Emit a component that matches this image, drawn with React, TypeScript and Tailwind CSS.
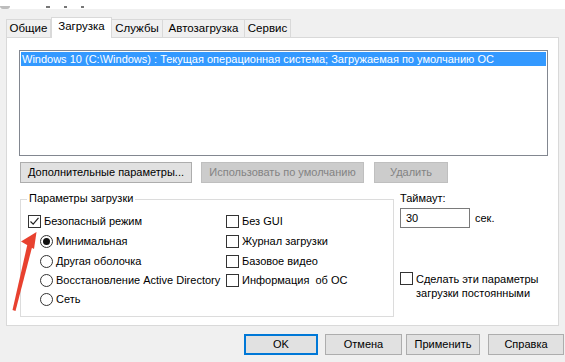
import React from "react";

const font = { fontFamily: '"Liberation Sans", Arial, sans-serif' };

function Check({ checked = false }: { checked?: boolean }) {
  return (
    <span className="w-[13px] h-[13px] border border-[#333333] bg-white flex items-center justify-center shrink-0">
      {checked && (
        <svg width="11" height="11" viewBox="0 0 11 11">
          <path d="M1.5 5.5 L4.2 8.2 L9.5 1.8" fill="none" stroke="#222" strokeWidth="1.2" />
        </svg>
      )}
    </span>
  );
}

function Radio({ checked = false }: { checked?: boolean }) {
  return (
    <span className="w-[13px] h-[13px] rounded-full border border-[#333333] bg-white flex items-center justify-center shrink-0">
      {checked && <span className="w-[7px] h-[7px] rounded-full bg-[#111]" />}
    </span>
  );
}

function Btn({ children, w, cls = "" }: { children: React.ReactNode; w: string; cls?: string }) {
  return (
    <div className={`h-[21px] ${w} border border-[#adadad] bg-[#e1e1e1] flex items-center justify-center text-black ${cls}`}>
      {children}
    </div>
  );
}

export default function App() {
  return (
    <div className="w-[565px] h-[362px] bg-[#f0f0f0] relative overflow-hidden text-[11px] text-black leading-none whitespace-nowrap" style={font}>
      {/* title strip */}
      <div className="h-[9px] bg-white overflow-hidden flex items-end">
        <div className="w-[10px] h-[3px] bg-[#bdbdbd] rounded-b-sm ml-0" />
        <div className="ml-[36px] mb-[1px] w-[48px] h-[2px] flex gap-[14px]">
          <span className="w-[4px] h-[2px] bg-[#777]" />
          <span className="w-[3px] h-[2px] bg-[#777]" />
          <span className="w-[3px] h-[2px] bg-[#777]" />
        </div>
      </div>

      {/* tabs */}
      <div className="mt-[8px] pl-[6px] flex items-end h-[20px] text-[11.5px]">
        <div className="w-[45px] h-[18px] border border-b-0 border-[#d9d9d9] bg-[#f0f0f0] flex items-center justify-center">Общие</div>
        <div className="w-[61px] h-[21px] border border-b-0 border-[#d9d9d9] bg-white flex items-center justify-center pb-[2px] relative z-10 -mb-px">Загрузка</div>
        <div className="w-[51px] h-[18px] border border-b-0 border-l-0 border-[#d9d9d9] bg-[#f0f0f0] flex items-center justify-center">Службы</div>
        <div className="w-[82px] h-[18px] border border-b-0 border-l-0 border-[#d9d9d9] bg-[#f0f0f0] flex items-center justify-center">Автозагрузка</div>
        <div className="w-[46px] h-[18px] border border-b-0 border-l-0 border-[#d9d9d9] bg-[#f0f0f0] flex items-center justify-center">Сервис</div>
      </div>

      {/* panel */}
      <div className="ml-[6px] w-[553px] h-[289px] bg-white border border-[#d9d9d9] pl-[12px] pt-[12px]">
        {/* list */}
        <div className="w-[529px] h-[106px] border border-[#828790] p-px">
          <div className="h-[14px] bg-[#3399ff] text-white flex items-center pl-[1px]">
            Windows 10 (C:\Windows) : Текущая операционная система; Загружаемая по умолчанию ОС
          </div>
        </div>

        {/* buttons row */}
        <div className="mt-[6px] flex items-center">
          <Btn w="w-[172px]" cls="ml-px">Дополнительные параметры...</Btn>
          <div className="ml-[9px] h-[21px] w-[163px] border border-[#bfbfbf] bg-[#cccccc] text-[#838383] flex items-center justify-center">Использовать по умолчанию</div>
          <div className="ml-[10px] h-[21px] w-[74px] border border-[#bfbfbf] bg-[#cccccc] text-[#838383] flex items-center justify-center">Удалить</div>
        </div>

        <div className="mt-[9px] flex">
          {/* group box */}
          <div className="ml-px mt-[7px] w-[374px] h-[118px] border border-[#dcdcdc] relative">
            <div className="absolute -top-[7px] left-[6px] bg-white px-[2px]">Параметры загрузки</div>
            <div className="mt-[15px] flex">
              <div className="ml-[7px] w-[198px] flex flex-col">
                <div className="h-[20px] flex items-start gap-[3px]"><Check checked /><span className="mt-[1px]">Безопасный режим</span></div>
                <div className="h-[20px] flex items-start gap-[3px] pl-[12px]"><Radio checked /><span className="mt-[1px]">Минимальная</span></div>
                <div className="h-[19px] flex items-start gap-[3px] pl-[12px]"><Radio /><span className="mt-[1px]">Другая оболочка</span></div>
                <div className="h-[19px] flex items-start gap-[3px] pl-[12px]"><Radio /><span className="mt-[1px]">Восстановление Active Directory</span></div>
                <div className="h-[19px] flex items-start gap-[3px] pl-[12px]"><Radio /><span className="mt-[1px]">Сеть</span></div>
              </div>
              <div className="flex flex-col">
                <div className="h-[20px] flex items-start gap-[3px]"><Check /><span className="mt-[1px]">Без GUI</span></div>
                <div className="h-[20px] flex items-start gap-[3px]"><Check /><span className="mt-[1px]">Журнал загрузки</span></div>
                <div className="h-[19px] flex items-start gap-[3px]"><Check /><span className="mt-[1px]">Базовое видео</span></div>
                <div className="h-[19px] flex items-start gap-[3px]"><Check /><span className="mt-[1px]">Информация&nbsp; об ОС</span></div>
              </div>
            </div>
          </div>

          {/* right side */}
          <div className="ml-[6px] flex flex-col">
            <div className="h-[12px] mt-[1px]">Таймаут:</div>
            <div className="mt-[3px] flex items-center">
              <div className="w-[70px] h-[20px] border border-[#7a7a7a] flex items-center pl-[5px]">30</div>
              <span className="ml-[5px]">сек.</span>
            </div>
            <div className="mt-[44px] flex items-start gap-[3px]">
              <Check />
              <div className="leading-[14px] mt-[0px]">
                Сделать эти параметры<br />загрузки постоянными
              </div>
            </div>
          </div>
        </div>
      </div>

      {/* bottom buttons */}
      <div className="mt-[8px] flex">
        <div className="ml-[244px] h-[21px] w-[74px] border-2 border-[#0078d7] bg-[#e1e1e1] flex items-center justify-center">OK</div>
        <Btn w="w-[77px]" cls="ml-[7px]">Отмена</Btn>
        <Btn w="w-[74px]" cls="ml-[4px]">Применить</Btn>
        <Btn w="w-[76px]" cls="ml-[8px]">Справка</Btn>
      </div>

      {/* red arrow annotation */}
      <svg className="absolute left-0 top-0 pointer-events-none" width="565" height="362" viewBox="0 0 565 362">
        <polygon points="36.5,232 21,241.5 34,249" fill="#e8412f" />
        <polygon points="27.5,244 32.5,245.5 15.5,311 12.5,310" fill="#e8412f" />
      </svg>
    </div>
  );
}
